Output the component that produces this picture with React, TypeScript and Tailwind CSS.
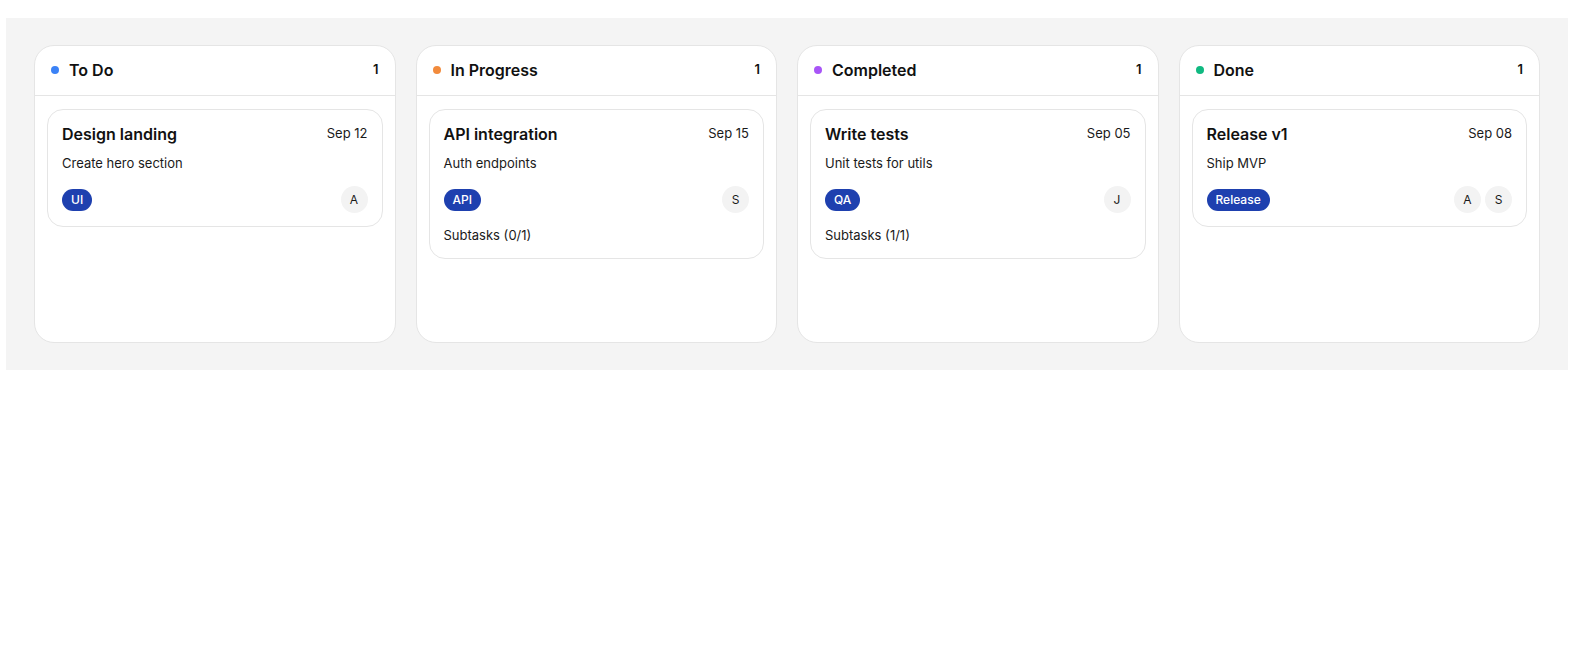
import React from 'react';

interface Task {
  id: string;
  title: string;
  date: string;
  description: string;
  tag: string;
  assignees: string[];
  subtasks?: { done: number; total: number };
}

interface Column {
  id: string;
  name: string;
  dot: string;
  tasks: Task[];
}

const columns: Column[] = [
  {
    id: 'todo',
    name: 'To Do',
    dot: 'bg-[#3b82f6]',
    tasks: [
      { id: 't1', title: 'Design landing', date: 'Sep 12', description: 'Create hero section', tag: 'UI', assignees: ['A'] },
    ],
  },
  {
    id: 'progress',
    name: 'In Progress',
    dot: 'bg-[#f28b3c]',
    tasks: [
      {
        id: 't2',
        title: 'API integration',
        date: 'Sep 15',
        description: 'Auth endpoints',
        tag: 'API',
        assignees: ['S'],
        subtasks: { done: 0, total: 1 },
      },
    ],
  },
  {
    id: 'completed',
    name: 'Completed',
    dot: 'bg-[#a855f7]',
    tasks: [
      {
        id: 't3',
        title: 'Write tests',
        date: 'Sep 05',
        description: 'Unit tests for utils',
        tag: 'QA',
        assignees: ['J'],
        subtasks: { done: 1, total: 1 },
      },
    ],
  },
  {
    id: 'done',
    name: 'Done',
    dot: 'bg-[#10b981]',
    tasks: [
      { id: 't4', title: 'Release v1', date: 'Sep 08', description: 'Ship MVP', tag: 'Release', assignees: ['A', 'S'] },
    ],
  },
];

const TaskCard: React.FC<{ task: Task }> = ({ task }) => (
  <div className="bg-white border border-[#e5e5e5] rounded-2xl px-3.5 pt-3 pb-[13px]">
    <div className="flex items-start justify-between h-6">
      <h3 className="text-base font-semibold text-[#111111] leading-6">{task.title}</h3>
      <span className="text-[13px] text-[#1a1a1a] leading-5 mt-px">{task.date}</span>
    </div>
    <p className="mt-[7px] text-[13px] leading-5 text-[#1a1a1a]">{task.description}</p>
    <div className="mt-[13px] flex items-center justify-between">
      <span className="h-[22px] px-[9px] rounded-full bg-[#1e40af] text-white text-xs font-medium flex items-center">
        {task.tag}
      </span>
      <div className="flex gap-1">
        {task.assignees.map((a) => (
          <span
            key={a}
            className="w-[27px] h-[27px] rounded-full bg-[#f3f3f3] text-xs text-[#1a1a1a] flex items-center justify-center"
          >
            {a}
          </span>
        ))}
      </div>
    </div>
    {task.subtasks && (
      <p className="mt-3 text-[13px] leading-5 text-[#1a1a1a]">
        Subtasks ({task.subtasks.done}/{task.subtasks.total})
      </p>
    )}
  </div>
);

export default function App() {
  return (
    <div className="min-h-screen bg-white" style={{ fontFamily: 'Inter, "Noto Sans", sans-serif' }}>
      <div className="ml-[6px] mt-[18px] w-[1562px] bg-[#f4f4f4] px-7 py-[27px]">
        <div className="grid grid-cols-4 gap-5">
          {columns.map((col) => (
            <div key={col.id} className="h-[298px] bg-white border border-[#e5e5e5] rounded-[20px] flex flex-col">
              <div className="h-[50px] px-4 pb-[2px] flex items-center justify-between border-b border-[#e5e5e5] shrink-0">
                <div className="flex items-center gap-2.5">
                  <span className={`w-2 h-2 rounded-full ${col.dot}`} />
                  <span className="text-base font-semibold text-[#111111]">{col.name}</span>
                </div>
                <span className="text-[13px] font-semibold text-[#111111]">{col.tasks.length}</span>
              </div>
              <div className="px-3 pt-[13px] pb-3 flex flex-col gap-3">
                {col.tasks.map((t) => (
                  <TaskCard key={t.id} task={t} />
                ))}
              </div>
            </div>
          ))}
        </div>
      </div>
    </div>
  );
}
